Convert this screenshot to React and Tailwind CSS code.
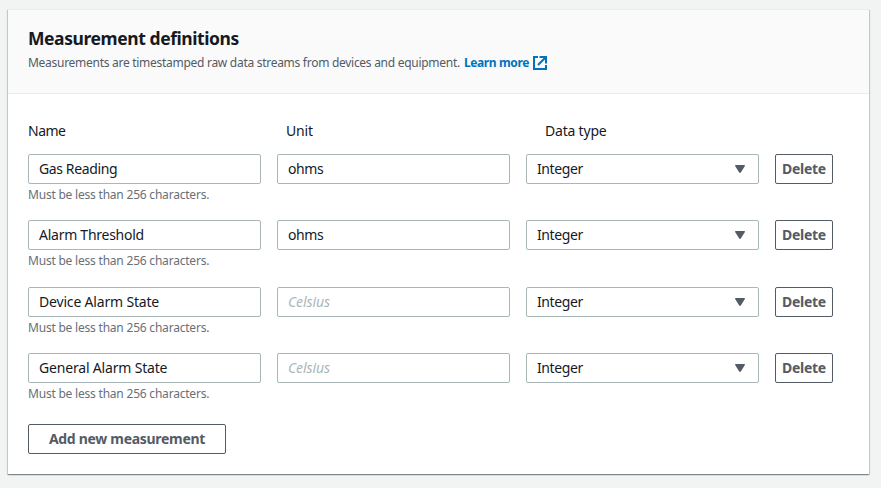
const rows = [
  { name: 'Gas Reading', unit: 'ohms', pitch: 'h-[66px]', track: 'tracking-[-0.38px]' },
  { name: 'Alarm Threshold', unit: 'ohms', pitch: 'h-[67px]', track: 'tracking-[-0.26px]' },
  { name: 'Device Alarm State', unit: '', pitch: 'h-[66px]', track: 'tracking-[-0.18px]' },
  { name: 'General Alarm State', unit: '', pitch: 'h-[71px]', track: 'tracking-[-0.18px]' },
];

const field =
  'flex h-[30px] w-[233px] items-center rounded-[2px] border border-[#aab7b8] bg-white px-[10px] pb-[2px] text-[14px] text-[#16191f]';
const button =
  'flex h-[30px] items-center justify-center rounded-[2px] border border-[#545b64] bg-white pb-[2px] text-[14px] font-bold tracking-[-0.3px] whitespace-nowrap text-[#545b64]';

function ExternalIcon() {
  return (
    <svg className="ml-[3px] h-4 w-4 shrink-0" viewBox="0 0 16 16" fill="none" stroke="#0073bb" strokeWidth="2">
      <path d="M6 2H2v12h12v-4" />
      <path d="M7.5 2H14v6.5M14 2L6 10" />
    </svg>
  );
}

function Row({ row }) {
  return (
    <div className={`flex gap-4 ${row.pitch}`}>
      <div>
        <div className={field}>
          <span className={row.track}>{row.name}</span>
        </div>
        <p className="mt-[2px] text-[12px] leading-[18px] tracking-[-0.21px] text-[#687078]">
          Must be less than 256 characters.
        </p>
      </div>
      <div className={field}>
        {row.unit ? (
          <span className="tracking-[-0.4px]">{row.unit}</span>
        ) : (
          <span className="tracking-[-0.1px] text-[#aab7b8] italic">Celsius</span>
        )}
      </div>
      <div className={`${field} justify-between`}>
        <span className="tracking-[-0.4px]">Integer</span>
        <svg className="mt-[2px] mr-[3px] h-2 w-[10px]" viewBox="0 0 10 8" fill="#545b64">
          <path d="M0 .7Q0 0 .7 0h8.6q.7 0 .7.7L5.8 7.6q-.8.8-1.6 0z" />
        </svg>
      </div>
      <button className={`${button} w-[58px]`}>Delete</button>
    </div>
  );
}

export default function App() {
  return (
    <div className="h-[488px] w-[881px] bg-[#f2f3f3] pt-[9px] pl-2 font-['Noto_Sans','Open_Sans',sans-serif]">
      <section className="h-[465px] w-[861px] border-t border-[#eaeded] bg-white shadow-[0_1px_1px_0_rgba(0,28,36,0.3),1px_1px_1px_0_rgba(0,28,36,0.15),-1px_1px_1px_0_rgba(0,28,36,0.15)]">
        <header className="h-[84px] border-b border-[#eaeded] bg-[#fafafa] px-5 pt-[17px]">
          <h2 className="text-[17.5px] leading-[22px] font-bold tracking-[-0.42px] text-[#16191f]">
            Measurement definitions
          </h2>
          <div className="mt-[5px] flex h-[18px] items-center text-[12px] text-[#545b64]">
            <span className="tracking-[-0.28px]">
              Measurements are timestamped raw data streams from devices and equipment.
            </span>
            <a className="ml-[4px] flex items-center font-bold tracking-[-0.37px] text-[#0073bb]">
              Learn more
              <ExternalIcon />
            </a>
          </div>
        </header>
        <div className="px-5 pt-[27px]">
          <div className="flex h-[33px] text-[14px] leading-[20px] text-[#16191f]">
            <span className="w-[258px] tracking-[-0.5px]">Name</span>
            <span className="w-[259px] tracking-[-0.2px]">Unit</span>
            <span className="tracking-[-0.2px]">Data type</span>
          </div>
          {rows.map((row) => (
            <Row key={row.name} row={row} />
          ))}
          <button className={`${button} w-[198px]`}>Add new measurement</button>
        </div>
      </section>
    </div>
  );
}
